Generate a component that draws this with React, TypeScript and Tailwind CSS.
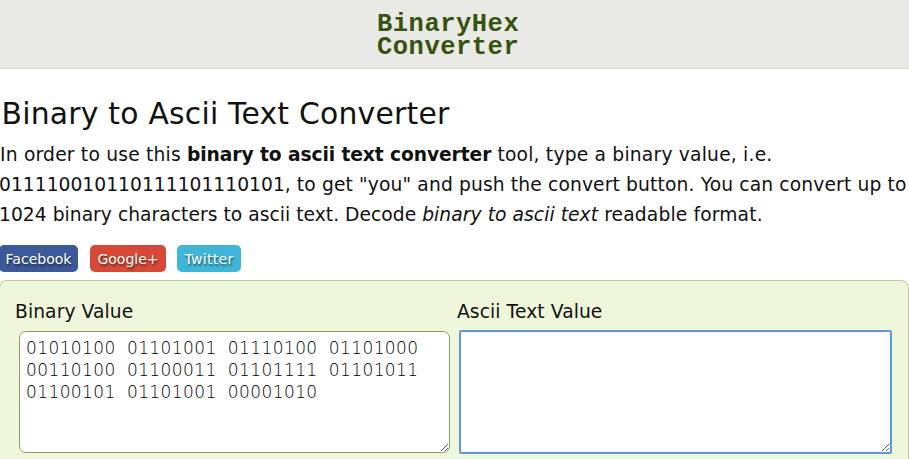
import type { ReactNode } from "react";

const BINARY =
  "01010100 01101001 01110100 01101000\n00110100 01100011 01101111 01101011\n01100101 01101001 00001010";

function Share({ label, className }: { label: string; className: string }) {
  return (
    <a
      className={`flex h-[27px] items-center justify-center rounded-[5px] pt-[2px] text-[14px] whitespace-nowrap text-white [text-shadow:1px_2px_2px_rgba(0,0,0,0.5)] ${className}`}
    >
      {label}
    </a>
  );
}

function Label({ children }: { children: ReactNode }) {
  return (
    <label className="block h-[30px] pt-px text-[18.7px] leading-[30px] tracking-[0.08px] whitespace-nowrap">
      {children}
    </label>
  );
}

export default function App() {
  return (
    <div className="h-[459px] w-[909px] overflow-hidden bg-white font-['DejaVu_Sans',Verdana,sans-serif] text-[#111]">
      <header className="h-[69px] border-b border-[#dcddd8] bg-[#e9eae6] pt-[13px] pl-[377px]">
        <div className="w-[150px] font-['Liberation_Mono',monospace] text-[25.5px] leading-[23px] font-bold tracking-[0.5px] text-[#37530f]">
          BinaryHex
          <br />
          Converter
        </div>
      </header>
      <h1 className="mt-[25px] h-[40px] pl-[1.5px] text-[29.8px] leading-[40px] tracking-[0.23px] whitespace-nowrap">
        Binary to Ascii Text Converter
      </h1>
      <div className="mt-[6px] text-[18.7px] leading-[30px] whitespace-nowrap">
        <p className="h-[30px] tracking-[0.2px]">
          In order to use this{" "}
          <b className="tracking-[-0.1px]">binary to ascii text converter</b> tool, type a binary value, i.e.
        </p>
        <p className="-ml-px h-[30px] tracking-[0.02px]">
          011110010110111101110101,<span className="tracking-[0.13px]"> to get "you" and push the convert button. You can convert up to</span>
        </p>
        <p className="-ml-px h-[30px] tracking-[0.03px]">
          1024 binary characters to ascii text. Decode <i className="tracking-[0.06px]">binary to ascii text</i>
          <span className="tracking-[0.14px]"> readable format.</span>
        </p>
      </div>
      <nav className="mt-[15px] flex">
        <Share label="Facebook" className="-ml-px w-[79px] bg-[#3b5998]" />
        <Share label="Google+" className="ml-[12px] w-[76px] bg-[#d64937]" />
        <Share label="Twitter" className="ml-[11px] w-[64px] bg-[#40b5d8] tracking-[0.3px]" />
      </nav>
      <form className="-ml-px mt-[8px] flex h-[200px] w-[910px] rounded-[8px] border border-[#bccb98] bg-[#eef7da] pt-[15px] pl-[15px]">
        <div className="w-[442px]">
          <Label>Binary Value</Label>
          <textarea
            spellCheck={false}
            defaultValue={BINARY}
            className="mt-[5px] ml-[4px] block h-[122px] w-[431px] resize overflow-hidden rounded-[7px] border border-[#8c9c6c] bg-white px-[6px] pt-[5px] font-['DejaVu_Sans_Light','DejaVu_Sans',sans-serif] text-[17px] leading-[22px] font-extralight tracking-[0.4px] [word-spacing:5.4px] text-black outline-none"
          />
        </div>
        <div>
          <Label>Ascii Text Value</Label>
          <div className="mt-[4px] ml-[2px] h-[124px] w-[433px] rounded-[2px] border-2 border-[#6298da] bg-[#eef7da]">
            <textarea className="block h-[120px] w-[429px] resize overflow-hidden rounded-[5px] bg-white outline-none" />
          </div>
        </div>
      </form>
    </div>
  );
}
